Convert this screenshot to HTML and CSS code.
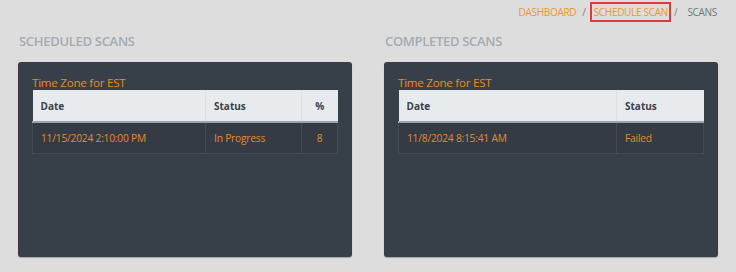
FILE: index.html
```html
<!DOCTYPE html>
<html lang="en">
<head>
  <meta charset="UTF-8">
  <title>Scans</title>
  <link rel="stylesheet" href="styles.css">
</head>
<body>

  <!-- Fil d'Ariane -->
  <div class="breadcrumb">
    <a href="#">DASHBOARD</a>
    <span class="sep">/</span>
    <a href="#" class="current">SCHEDULE SCAN</a>
    <span class="sep sep-after">/</span>
    <span class="last">SCANS</span>
  </div>

  <div class="columns">
    <!-- Scans planifiés -->
    <div class="column">
      <h2>SCHEDULED SCANS</h2>
      <div class="card">
        <div class="tz">Time Zone for EST</div>
        <table>
          <thead>
            <tr>
              <th class="col-date-l">Date</th>
              <th class="col-status-l">Status</th>
              <th class="col-pct">%</th>
            </tr>
          </thead>
          <tbody>
            <tr>
              <td>11/15/2024 2:10:00 PM</td>
              <td>In Progress</td>
              <td class="col-pct">8</td>
            </tr>
          </tbody>
        </table>
      </div>
    </div>

    <!-- Scans terminés -->
    <div class="column">
      <h2>COMPLETED SCANS</h2>
      <div class="card">
        <div class="tz">Time Zone for EST</div>
        <table>
          <thead>
            <tr>
              <th class="col-date-r">Date</th>
              <th>Status</th>
            </tr>
          </thead>
          <tbody>
            <tr>
              <td>11/8/2024 8:15:41 AM</td>
              <td>Failed</td>
            </tr>
          </tbody>
        </table>
      </div>
    </div>
  </div>

</body>
</html>
```

FILE: styles.css
```css
body {
  margin: 0;
  background-color: #dddddd;
  font-family: "Open Sans", "Noto Sans", sans-serif;
  width: 736px;
  height: 272px;
  overflow: hidden;
}

/* Fil d'Ariane */
.breadcrumb {
  display: flex;
  justify-content: flex-end;
  align-items: center;
  height: 24px;
  padding: 0 19px 0 0;
  font-size: 10px;
  letter-spacing: -0.3px;
}

.breadcrumb a {
  color: #f0962a;
  text-decoration: none;
}

.breadcrumb .current {
  border: 2px solid #e23a3a;
  padding: 1px 1px 1px 2px;
}

.breadcrumb .sep {
  color: #7a8088;
  margin: 0 4px 0 6px;
}

.breadcrumb .sep-after {
  margin: 0 10px 0 3px;
}

.breadcrumb .last {
  color: #6f757c;
}

/* Colonnes */
.columns {
  display: flex;
  gap: 32px;
  padding: 0 18px;
}

.column {
  flex: 1;
}

h2 {
  margin: 8px 0 10px 1px;
  font-size: 13px;
  font-weight: 600;
  color: #a3abb3;
  letter-spacing: -0.3px;
  height: 20px;
  line-height: 19px;
}

.card {
  background-color: #373f48;
  border-radius: 3px;
  height: 195px;
  padding: 14px 14px 0 14px;
  box-sizing: border-box;
  box-shadow: 0 1px 1px rgba(0, 0, 0, 0.25);
}

.tz {
  color: #f28a16;
  font-size: 11.5px;
  line-height: 14px;
  letter-spacing: -0.2px;
}

table {
  width: 100%;
  border-collapse: collapse;
  table-layout: fixed;
}

th, td {
  box-sizing: border-box;
}

thead th {
  background-color: #e8ebee;
  color: #3a414a;
  font-size: 10px;
  font-weight: 700;
  text-align: left;
  height: 32px;
  padding: 0 8px;
  border-right: 1px solid #dde1e5;
  border-bottom: 2px solid #9aa2aa;
}

thead th:last-child {
  border-right: none;
}

tbody td {
  background-color: #343b44;
  color: #e58b28;
  font-size: 10.2px;
  letter-spacing: -0.2px;
  height: 31px;
  padding: 1px 8px 0 8px;
  border: 1px solid #434b54;
}

.col-date-l {
  width: 173px;
}

.col-status-l {
  width: 96px;
}

.col-date-r {
  width: 218px;
}

.col-pct {
  text-align: center !important;
}
```
